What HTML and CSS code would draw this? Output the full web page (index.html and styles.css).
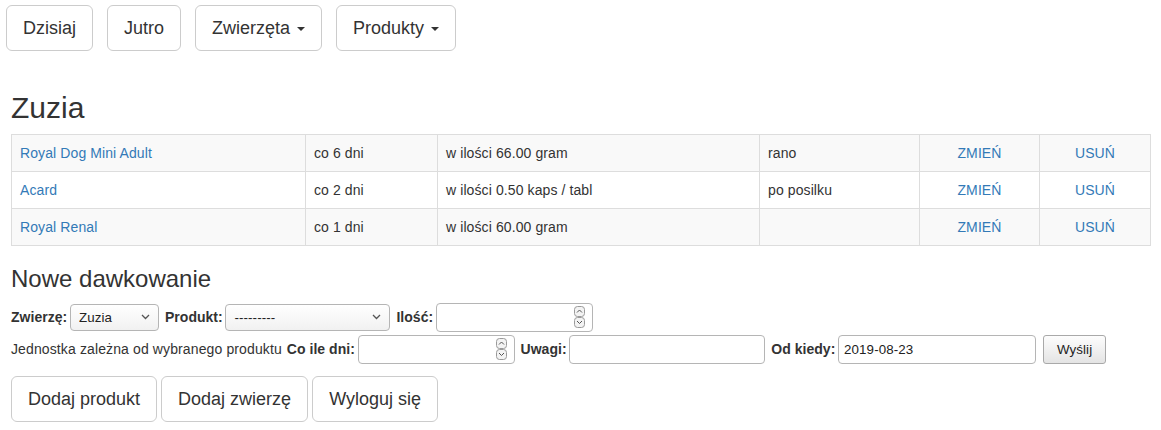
FILE: index.html
```html
<!DOCTYPE html>
<html lang="pl">
<head>
<meta charset="utf-8">
<title>Dawkowanie</title>
<link rel="stylesheet" href="styles.css">
</head>
<body>
<nav class="topnav">
  <a class="btn btn-lg" href="#">Dzisiaj</a>
  <a class="btn btn-lg" href="#">Jutro</a>
  <a class="btn btn-lg" href="#">Zwierzęta <span class="caret"></span></a>
  <a class="btn btn-lg" href="#">Produkty <span class="caret"></span></a>
</nav>

<main class="container">
  <h2 class="pet-name">Zuzia</h2>
  <table class="doses">
    <colgroup>
      <col class="c-prod"><col class="c-freq"><col class="c-amt"><col class="c-note"><col class="c-edit"><col class="c-del">
    </colgroup>
    <tbody>
      <tr>
        <td><a href="#">Royal Dog Mini Adult</a></td>
        <td>co 6 dni</td>
        <td>w ilości 66.00 gram</td>
        <td>rano</td>
        <td class="center"><a href="#">ZMIEŃ</a></td>
        <td class="center"><a href="#">USUŃ</a></td>
      </tr>
      <tr>
        <td><a href="#">Acard</a></td>
        <td>co 2 dni</td>
        <td>w ilości 0.50 kaps / tabl</td>
        <td>po posilku</td>
        <td class="center"><a href="#">ZMIEŃ</a></td>
        <td class="center"><a href="#">USUŃ</a></td>
      </tr>
      <tr>
        <td><a href="#">Royal Renal</a></td>
        <td>co 1 dni</td>
        <td>w ilości 60.00 gram</td>
        <td></td>
        <td class="center"><a href="#">ZMIEŃ</a></td>
        <td class="center"><a href="#">USUŃ</a></td>
      </tr>
    </tbody>
  </table>

  <h3 class="section-title">Nowe dawkowanie</h3>
  <form class="dose-form">
    <div class="form-row">
      <label class="lbl first">Zwierzę:</label>
      <span class="select w-pet">
        <select><option>Zuzia</option></select>
        <svg class="chev" width="9" height="6" viewBox="0 0 9 6"><path d="M1 1 L4.5 4.5 L8 1" fill="none" stroke="#555" stroke-width="1.3"/></svg>
      </span>
      <label class="lbl">Produkt:</label>
      <span class="select w-prod">
        <select><option>---------</option></select>
        <svg class="chev" width="9" height="6" viewBox="0 0 9 6"><path d="M1 1 L4.5 4.5 L8 1" fill="none" stroke="#555" stroke-width="1.3"/></svg>
      </span>
      <label class="lbl">Ilość:</label>
      <span class="field w-num">
        <input type="text" value="">
        <svg class="spin" width="11" height="22" viewBox="0 0 11 22"><rect x="0.5" y="0.5" width="10" height="10" rx="3" fill="#f3f3f3" stroke="#9a9a9a"/><path d="M3 6.5 L5.5 4 L8 6.5" fill="none" stroke="#555" stroke-width="1"/><rect x="0.5" y="11.5" width="10" height="10" rx="3" fill="#f3f3f3" stroke="#9a9a9a"/><path d="M3 15 L5.5 17.5 L8 15" fill="none" stroke="#555" stroke-width="1"/></svg>
      </span>
    </div>
    <div class="form-row">
      <span class="help">Jednostka zależna od wybranego produktu</span>
      <label class="lbl">Co ile dni:</label>
      <span class="field w-num">
        <input type="text" value="">
        <svg class="spin" width="11" height="22" viewBox="0 0 11 22"><rect x="0.5" y="0.5" width="10" height="10" rx="3" fill="#f3f3f3" stroke="#9a9a9a"/><path d="M3 6.5 L5.5 4 L8 6.5" fill="none" stroke="#555" stroke-width="1"/><rect x="0.5" y="11.5" width="10" height="10" rx="3" fill="#f3f3f3" stroke="#9a9a9a"/><path d="M3 15 L5.5 17.5 L8 15" fill="none" stroke="#555" stroke-width="1"/></svg>
      </span>
      <label class="lbl">Uwagi:</label>
      <span class="field w-text">
        <input type="text" value="">
      </span>
      <label class="lbl">Od kiedy:</label>
      <span class="field w-date">
        <input type="text" value="2019-08-23">
      </span>
      <button type="button" class="submit">Wyślij</button>
    </div>
  </form>

  <div class="actions">
    <a class="btn btn-lg" href="#">Dodaj produkt</a>
    <a class="btn btn-lg" href="#">Dodaj zwierzę</a>
    <a class="btn btn-lg" href="#">Wyloguj się</a>
  </div>
</main>
</body>
</html>
```

FILE: styles.css
```css
* { box-sizing: border-box; }

html, body {
  margin: 0;
  padding: 0;
}

body {
  font-family: "Liberation Sans", Arial, Helvetica, sans-serif;
  font-size: 14px;
  line-height: 20px;
  color: #333;
  background: #fff;
}

a { color: #337ab7; text-decoration: none; }

.btn {
  display: inline-block;
  border: 1px solid #ccc;
  background: #fff;
  color: #333;
  white-space: nowrap;
}

.btn-lg {
  padding: 10px 16px;
  font-size: 18px;
  line-height: 24px;
  border-radius: 6px;
}

.caret {
  display: inline-block;
  width: 0;
  height: 0;
  margin-left: 2px;
  vertical-align: middle;
  border-top: 4px solid #333;
  border-left: 4px solid transparent;
  border-right: 4px solid transparent;
}

.topnav {
  display: flex;
  gap: 14px;
  padding: 5px 0 0 6px;
}

.container {
  padding: 0 11px;
}

.pet-name {
  font-size: 30px;
  font-weight: 500;
  line-height: 33px;
  margin: 40px 0 10px;
}

.doses {
  width: 100%;
  border-collapse: collapse;
  table-layout: fixed;
  border: 1px solid #ddd;
  letter-spacing: 0.1px;
}

.c-prod { width: 294px; }
.c-freq { width: 132px; }
.c-amt { width: 322px; }
.c-note { width: 160px; }
.c-edit { width: 120px; }
.c-del { width: 111px; }

.doses td {
  border: 1px solid #ddd;
  padding: 8px;
  line-height: 20px;
  vertical-align: top;
}

.doses tr:nth-child(odd) td { background: #f9f9f9; }

.doses td.center { text-align: center; }

.section-title {
  font-size: 24px;
  font-weight: 500;
  line-height: 26.4px;
  margin: 20px 0 10px;
}

.dose-form {
  margin-top: -1.4px;
}

.form-row {
  display: flex;
  align-items: center;
  height: 32px;
}

.lbl {
  font-weight: bold;
  margin: 0 2.7px 0 6px;
  white-space: nowrap;
  letter-spacing: 0.03px;
}

.lbl.first { margin-left: 0; }

.help { margin-right: -1px; white-space: nowrap; letter-spacing: 0.12px; }

.select {
  display: flex;
  align-items: center;
  height: 27px;
  border: 1px solid #b5b5b5;
  border-radius: 4px;
  background: linear-gradient(#ffffff, #f1f1f1);
  padding: 0 8px 0 0;
}

.select select {
  appearance: none;
  -webkit-appearance: none;
  border: 0;
  background: transparent;
  font-family: "Liberation Sans", Arial, sans-serif;
  font-size: 13.33px;
  letter-spacing: 0.1px;
  color: #222;
  padding: 0 0 0 8px;
  flex: 1;
  min-width: 0;
  outline: none;
}

.chev { flex: none; }

.w-pet { width: 89px; }
.w-prod { width: 165px; }

.field {
  display: flex;
  align-items: center;
  height: 29px;
  border: 1px solid #b5b5b5;
  border-radius: 4px;
  background: #fff;
  padding: 0 7px 0 0;
}

.field input {
  border: 0;
  background: transparent;
  font-family: "Liberation Sans", Arial, sans-serif;
  font-size: 13.33px;
  letter-spacing: 0.1px;
  color: #222;
  padding: 0 0 0 5px;
  flex: 1;
  min-width: 0;
  outline: none;
}

.spin { flex: none; }

.w-num { width: 157px; }
.w-text { width: 196px; }
.w-date { width: 198px; }

.submit {
  margin-left: 7px;
  height: 29px;
  width: 63px;
  padding: 0;
  border: 1px solid #a9a9a9;
  border-radius: 3px;
  background: linear-gradient(#fdfdfd, #e4e4e4);
  font-family: "Liberation Sans", Arial, sans-serif;
  font-size: 13.33px;
  letter-spacing: 0.1px;
  color: #222;
}

.actions {
  display: flex;
  gap: 4px;
  margin-top: 11px;
}
```
